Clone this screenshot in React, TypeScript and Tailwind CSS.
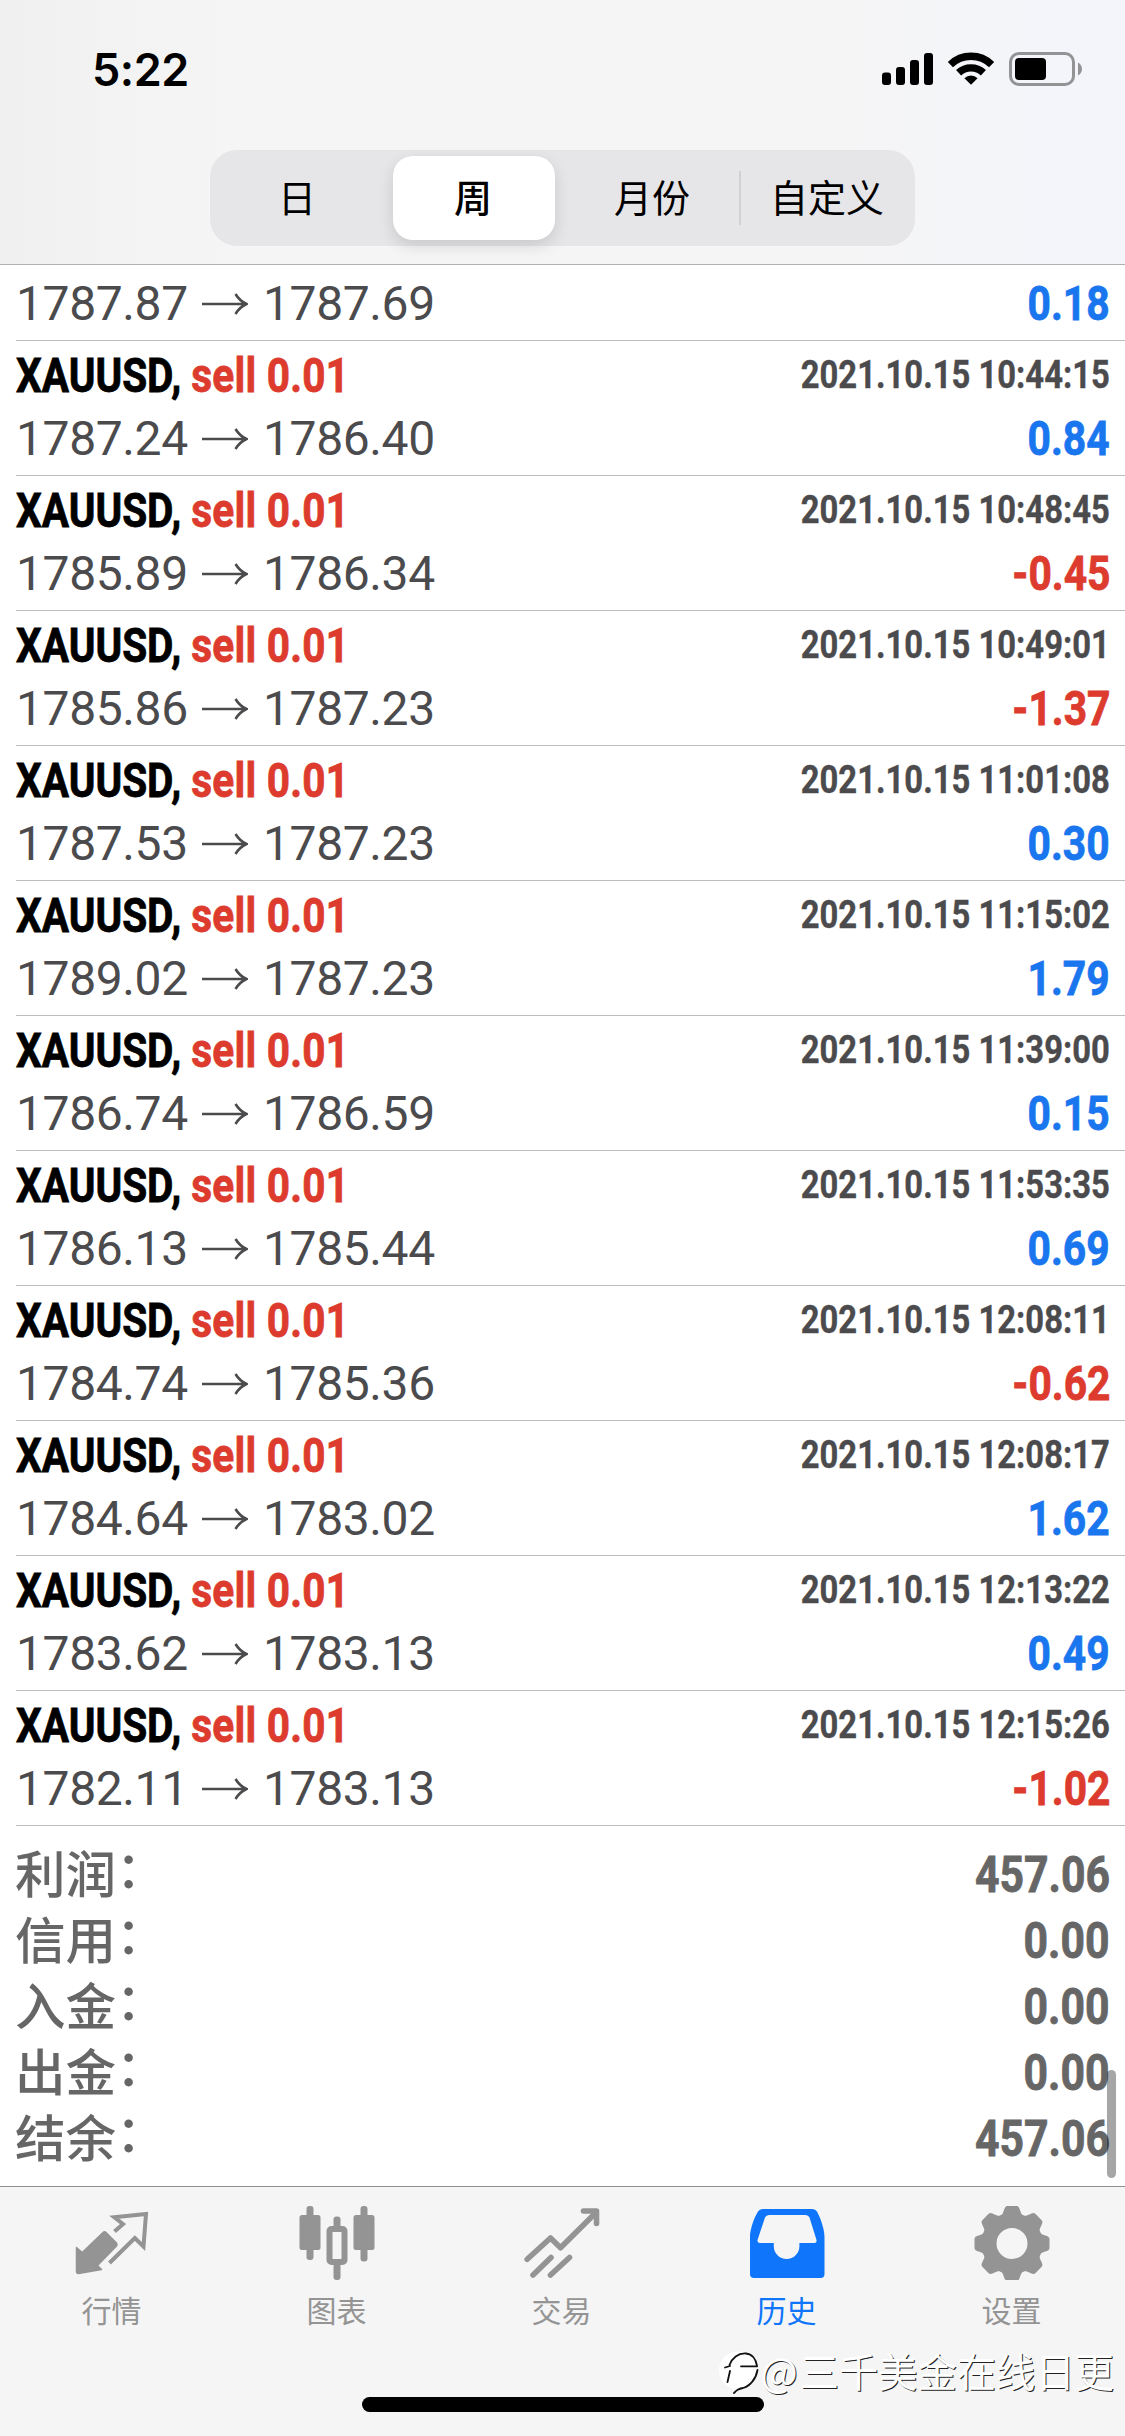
import type { ReactNode } from "react";

type Deal = {
  open: string;
  close: string;
  profit: string;
  time: string;
};

const deals: Deal[] = [
  { open: "1787.24", close: "1786.40", profit: "0.84", time: "2021.10.15 10:44:15" },
  { open: "1785.89", close: "1786.34", profit: "-0.45", time: "2021.10.15 10:48:45" },
  { open: "1785.86", close: "1787.23", profit: "-1.37", time: "2021.10.15 10:49:01" },
  { open: "1787.53", close: "1787.23", profit: "0.30", time: "2021.10.15 11:01:08" },
  { open: "1789.02", close: "1787.23", profit: "1.79", time: "2021.10.15 11:15:02" },
  { open: "1786.74", close: "1786.59", profit: "0.15", time: "2021.10.15 11:39:00" },
  { open: "1786.13", close: "1785.44", profit: "0.69", time: "2021.10.15 11:53:35" },
  { open: "1784.74", close: "1785.36", profit: "-0.62", time: "2021.10.15 12:08:11" },
  { open: "1784.64", close: "1783.02", profit: "1.62", time: "2021.10.15 12:08:17" },
  { open: "1783.62", close: "1783.13", profit: "0.49", time: "2021.10.15 12:13:22" },
  { open: "1782.11", close: "1783.13", profit: "-1.02", time: "2021.10.15 12:15:26" }
];

const summary = [
  { label: "利润", value: "457.06" },
  { label: "信用", value: "0.00" },
  { label: "入金", value: "0.00" },
  { label: "出金", value: "0.00" },
  { label: "结余", value: "457.06" }
];

function StatusBar() {
  return (
    <div className="flex h-[150px] items-start justify-between pl-[92px] pr-[42px]">
      <span className="mt-[42px] font-['Inter',sans-serif] text-[45px] font-semibold leading-[55px] tracking-[-0.5px] text-black">
        5:22
      </span>
      <svg className="mt-[50px]" width="203" height="38" viewBox="880 50 203 38">
        <rect x="882" y="72.5" width="9" height="12.5" rx="3" />
        <rect x="896" y="67" width="9" height="18" rx="3" />
        <rect x="910" y="60" width="9" height="25" rx="3" />
        <rect x="924" y="53" width="9" height="32" rx="3" />
        <g fill="none" stroke="#000" strokeWidth="7.4">
          <path d="M950.4 64.6A29.6 29.6 0 0 1 991.6 64.6" />
          <path d="M958.6 72.8A18 18 0 0 1 983.4 72.8" />
        </g>
        <path d="M971 84.8L964.4 78.2A9.6 9.6 0 0 1 977.6 78.2Z" />
        <rect x="1010.5" y="53.5" width="63" height="31" rx="8.5" fill="none" stroke="#939396" strokeWidth="3" />
        <rect x="1015" y="58" width="31" height="22" rx="4" />
        <path d="M1078 62.5C1083.3 65 1083.3 73 1078 75.5Z" fill="#939396" />
      </svg>
    </div>
  );
}

function PeriodTabs() {
  return (
    <div className="mx-[210px] flex h-24 items-center rounded-[27px] bg-[#e6e5e7] font-['Noto_Sans_CJK_SC',sans-serif] text-[38px] leading-none text-black">
      <button type="button" className="w-[183px] pb-1 pr-[9px] text-center">
        日
      </button>
      <button
        type="button"
        className="flex h-[84px] w-[162px] items-center justify-center rounded-[20px] bg-white pb-1 pr-0.5 font-medium shadow-[0_6px_16px_rgba(0,0,0,0.13)]"
      >
        周
      </button>
      <button type="button" className="w-[184px] pb-1 pl-2.5 text-center">
        月份
      </button>
      <span className="h-[54px] w-0.5 bg-[#d1d1d3]" />
      <button type="button" className="flex-1 pb-1 pr-0.5 text-center">
        自定义
      </button>
    </div>
  );
}

function Prices({ open, close, profit }: Pick<Deal, "open" | "close" | "profit">) {
  return (
    <div className="flex h-[60px] items-center justify-between font-['Roboto','Liberation_Sans',sans-serif] text-[48px] leading-none">
      <div className="flex items-center tracking-[-0.4px] text-[#4b4b4e]">
        <span className="w-[186px]">{open}</span>
        <svg className="mr-[15px]" width="46" height="24" viewBox="0 0 46 24" fill="none" stroke="#4b4b4e" strokeWidth="2.6">
          <path d="M0 12H44.5M33.5 2C36.5 7 40 10 44.5 12C40 14 36.5 17 33.5 22" />
        </svg>
        <span>{close}</span>
      </div>
      <span
        className={[
          "origin-right scale-x-[.85] font-bold [-webkit-text-stroke:0.8px_currentColor]",
          profit.startsWith("-") ? "text-[#dc3b2e]" : "text-[#1a76ee]"
        ].join(" ")}
      >
        {profit}
      </span>
    </div>
  );
}

function DealRow({ deal }: { deal: Deal }) {
  return (
    <div className="ml-4 h-[135px] border-b border-[#bcbcbf] pr-[15px]">
      <div className="flex h-[68px] items-center justify-between whitespace-nowrap pt-px font-['Roboto','Liberation_Sans',sans-serif] font-bold leading-none">
        <span className="origin-left scale-x-[.845] text-[48px] text-black [-webkit-text-stroke:0.8px_currentColor]">
          XAUUSD, <span className="tracking-[0.3px] text-[#dc3b2e]">sell 0.01</span>
        </span>
        <span className="origin-right scale-x-[.852] text-[38.5px] text-[#4b4b4e] [-webkit-text-stroke:0.4px_currentColor]">
          {deal.time}
        </span>
      </div>
      <Prices {...deal} />
    </div>
  );
}

function Tab({ label, active, viewBox, children }: { label: string; active?: boolean; viewBox: string; children: ReactNode }) {
  return (
    <button
      type="button"
      className={["flex flex-1 flex-col items-center pr-[2px] pt-[13px]", active ? "text-[#0f76fb]" : "text-[#949494]"].join(" ")}
    >
      <svg width="80" height="80" viewBox={viewBox} fill="currentColor" strokeLinecap="round" strokeLinejoin="round">
        {children}
      </svg>
      <span className="mt-[11px] font-['Noto_Sans_CJK_SC',sans-serif] text-[30px] leading-[36px]">{label}</span>
    </button>
  );
}

function TabBar() {
  return (
    <nav className="flex h-[211px] border-t border-[#8e8e8e]">
      <Tab label="行情" viewBox="71.5 2200 80 80">
        <path
          d="M76 2247.5L81.7 2252.5L102.5 2232.5Q104 2231 105.5 2232.5L116 2243Q117 2244.5 116 2246L97 2265.5L101 2269.5L78 2273.5Q76 2273.5 76 2271.5Z"
          stroke="currentColor"
          strokeWidth="1.5"
        />
        <path
          d="M114 2231.5L122.5 2224L113.8 2217.3L145.5 2214L143 2246.5L134.3 2238L109 2263"
          fill="none"
          stroke="currentColor"
          strokeWidth="4"
          strokeLinecap="butt"
          strokeLinejoin="miter"
        />
      </Tab>
      <Tab label="图表" viewBox="296.5 2200 80 80">
        <rect x="306" y="2206" width="7" height="54" rx="3" />
        <rect x="299" y="2215" width="21" height="35" rx="2.5" />
        <rect x="333" y="2216.5" width="7" height="12.5" rx="3" />
        <rect x="333" y="2263" width="7" height="17" rx="3" />
        <rect x="329" y="2229" width="15" height="33" rx="2" fill="none" stroke="currentColor" strokeWidth="6" />
        <rect x="360" y="2206" width="7" height="55.5" rx="3" />
        <rect x="353" y="2215" width="21" height="35" rx="2.5" />
      </Tab>
      <Tab label="交易" viewBox="521.5 2200 80 80">
        <g fill="none" stroke="currentColor" strokeWidth="5.6">
          <path d="M526.7 2259.3L550 2238L560 2247.7L595 2213" />
          <path d="M583 2211H596V2223.5" />
          <path d="M532.5 2275L550.5 2257.5" />
          <path d="M550 2275L569 2257.5" />
        </g>
      </Tab>
      <Tab label="历史" active viewBox="746.5 2200 80 80">
        <path
          fillRule="evenodd"
          d="M762 2209H812Q815 2209 816.5 2211.5C820 2218 824 2229 824 2237V2274Q824 2278 820 2278H753.5Q749.5 2278 749.5 2274V2237C749.5 2229 753.5 2218 757.5 2211.5Q759 2209 762 2209ZM768.5 2215Q765.5 2215 764.5 2217.5L757 2240Q756.5 2243 759.5 2243H773.3V2246.3A12.8 12.8 0 0 0 798.9 2246.3V2243H814Q816.5 2243 816 2240L809 2217.5Q808 2215 805 2215Z"
        />
      </Tab>
      <Tab label="设置" viewBox="-40 -43.5 80 80">
        <circle r="23" fill="none" stroke="currentColor" strokeWidth="15" />
        {[0, 45, 90, 135, 180, 225, 270, 315].map((angle) => (
          <path
            key={angle}
            transform={`rotate(${angle})`}
            d="M-11.5 -27.5C-7.5 -30 -8.5 -37.5 -4.5 -37.5H4.5C8.5 -37.5 7.5 -30 11.5 -27.5Z"
          />
        ))}
      </Tab>
    </nav>
  );
}

function Watermark() {
  return (
    <div className="absolute bottom-[39px] right-[11px] flex items-center">
      <svg
        className="mt-0.5"
        width="44"
        height="52"
        viewBox="716 2349 44 52"
        fill="none"
        stroke="#111"
        strokeWidth="1.8"
        strokeLinecap="round"
      >
        <circle cx="738" cy="2374.5" r="19" fill="#fff" stroke="none" />
        <path d="M729.5 2369C732 2362 738 2357 746 2357.5C752 2358 756 2363 757 2370" />
        <path d="M741 2370.3H757M725 2371.5L730 2370" />
        <path d="M757.5 2374C756 2383 750 2390 743 2392C738 2393 737 2394 734 2397M730 2375L727.5 2386" />
      </svg>
      <span className="whitespace-nowrap font-['Noto_Sans_CJK_SC',sans-serif] text-[39.3px] leading-[52px] text-white [text-shadow:1px_1px_0_#222]">
        <span className="mr-0.5">@</span>三千美金在线日更
      </span>
    </div>
  );
}

export default function App() {
  return (
    <div className="relative flex h-[2436px] w-[1125px] flex-col overflow-hidden bg-white">
      <header className="h-[265px] border-b border-[#b0b0b3] bg-[linear-gradient(90deg,#f0f0f0_0%,#f5f5f5_20%,#f5f5f6_75%,#f3f5fb_100%)]">
        <StatusBar />
        <PeriodTabs />
      </header>

      <main className="relative flex-1">
        <div className="ml-4 h-[76px] border-b border-[#bcbcbf] pr-[15px] pt-[9px]">
          <Prices open="1787.87" close="1787.69" profit="0.18" />
        </div>
        {deals.map((deal) => (
          <DealRow key={deal.time} deal={deal} />
        ))}

        <div className="px-[15px] pt-4 text-[#666]">
          {summary.map((row) => (
            <div key={row.label} className="flex h-[66px] items-center justify-between leading-none">
              <span className="flex pb-2 font-['Noto_Sans_CJK_SC',sans-serif] text-[50.5px] font-medium">
                {row.label}
                <span className="-mt-[5px]">：</span>
              </span>
              <span className="origin-right scale-x-[.855] font-['Roboto','Liberation_Sans',sans-serif] text-[50px] font-bold [-webkit-text-stroke:0.8px_currentColor]">
                {row.value}
              </span>
            </div>
          ))}
        </div>

        <div className="absolute bottom-2 right-[9px] h-[108px] w-[9px] rounded-full bg-black/35" />
      </main>

      <footer className="relative h-[250px] bg-[#f5f5f5]">
        <TabBar />
        <div className="mx-auto h-[15px] w-[402px] rounded-full bg-black" />
        <Watermark />
      </footer>
    </div>
  );
}
